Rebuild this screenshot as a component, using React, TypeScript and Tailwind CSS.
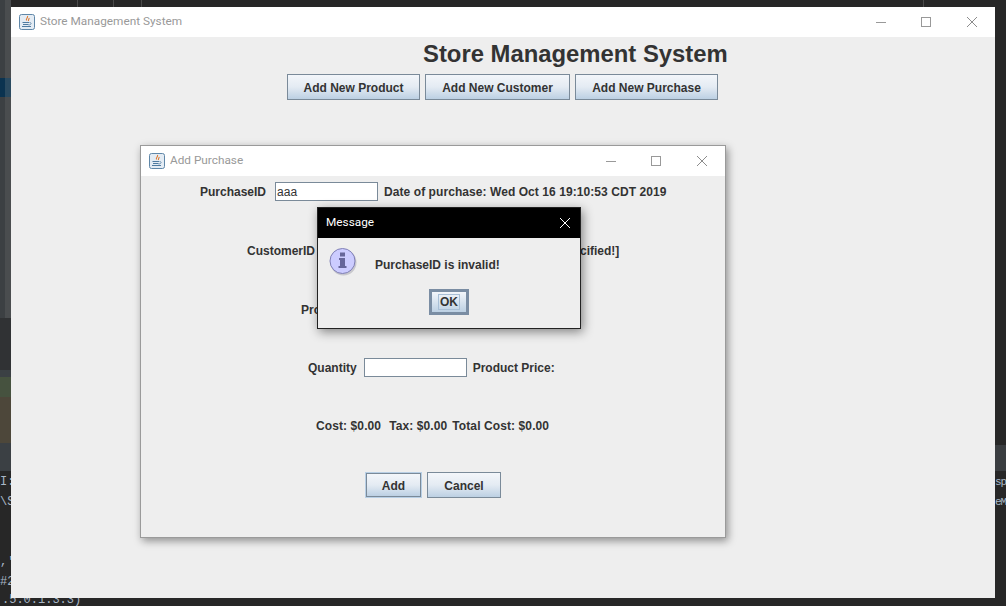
const sans = "font-['Liberation_Sans',Arial,sans-serif]";
const mono = "font-['Liberation_Mono',monospace]";
const label = "pt-[2px] text-[12px] font-bold leading-[14px] text-[#333333] whitespace-nowrap";
const btn =
  "flex items-center justify-center pt-[2px] h-[26px] border border-[#7a8a99] bg-gradient-to-b from-[#f3f6fa] via-[#e4ebf3] to-[#bcd0e3] text-[12px] font-bold text-[#333333] whitespace-nowrap";
const winTitle = "font-['Roboto',sans-serif] text-[11.8px]";

function JavaIcon() {
  return (
    <svg width="16" height="16" viewBox="0 0 16 16" className="shrink-0">
      <rect x="0.5" y="0.5" width="15" height="15" rx="2" fill="#e4ecf4" stroke="#5f87a8" />
      <path d="M8.500 2c1 1.500-2 2.500-1 4.500M10 4c.5 1-1 1.500-.5 3" fill="none" stroke="#e0762a" strokeWidth="1.100" />
      <path d="M3.500 8.500h6.500M4 10.500h5.500M3 12.500h9" stroke="#4f7ba0" strokeWidth="1" />
      <path d="M10.500 8.500c2.500 0 2 2.500-1 2.500" fill="none" stroke="#4f7ba0" strokeWidth="0.800" />
    </svg>
  );
}

function WinControls() {
  return (
    <div className="flex items-center">
      <svg width="12" height="12" viewBox="0 0 12 12">
        <path d="M1 6.500h10" stroke="#999999" />
      </svg>
      <svg width="12" height="12" viewBox="0 0 12 12" className="ml-[33px]">
        <rect x="1.500" y="1.500" width="9" height="9" fill="none" stroke="#999999" />
      </svg>
      <svg width="12" height="12" viewBox="0 0 12 12" className="ml-[34px]">
        <path d="M1 1l10 10M11 1L1 11" stroke="#8c8c8c" />
      </svg>
    </div>
  );
}

function InfoIcon() {
  return (
    <svg width="30" height="30" viewBox="0 0 30 30" className="shrink-0">
      <circle cx="14.500" cy="15.500" r="13" fill="#8f8f9c" opacity="0.4" />
      <circle cx="13.500" cy="14" r="12.500" fill="#ccccff" stroke="#7f7fb5" />
      <rect x="11" y="5.500" width="5" height="4" fill="#66669a" />
      <path d="M10 11h6v8h1.500v2h-8v-2H11v-6h-1z" fill="#66669a" />
    </svg>
  );
}

export default function App() {
  return (
    <div className={`relative w-[1006px] h-[606px] overflow-hidden bg-[#272727] ${sans}`}>
      {/* editor behind the windows */}
      <div className="absolute left-0 top-0 w-[5px] h-[318px] bg-[#3c4043]">
        <div className="mt-[78px] h-[19px] bg-[#0b3350]" />
      </div>
      <div className="absolute left-[5px] top-0 w-[6px] h-[318px] bg-[#4a4d4f]">
        <div className="mt-[78px] h-[19px] bg-[#2a4a60]" />
      </div>
      <div className="absolute left-0 top-[318px] w-[11px] h-[52px] bg-[#303234]" />
      <div className="absolute left-0 top-[370px] w-[11px] h-[101px] bg-[#3b4044]">
        <div className="mt-[7px] h-[20px] bg-[#46523f]" />
        <div className="h-[46px] bg-[#4d473a]" />
      </div>
      <div className="absolute left-[995px] top-[445px] w-[11px] h-[26px] bg-[#3a3d40]" />
      <div className="absolute left-[77px] top-0 w-px h-[7px] bg-[#4a4a4a]" />
      <div className="absolute left-[113px] top-0 w-px h-[7px] bg-[#4a4a4a]" />
      <div className="absolute left-[141px] top-0 w-px h-[7px] bg-[#4a4a4a]" />
      <div className="absolute left-[923px] top-0 w-px h-[7px] bg-[#4a4a4a]" />
      <div className={`absolute left-0 top-[472px] ${mono} text-[12px] leading-[20px] text-[#a9b7c6] whitespace-pre`}>
        {"I:\n\\S\n\n\n,'\n#2"}
      </div>
      <div className={`absolute left-[2px] top-[595px] ${mono} text-[12px] leading-[10px] text-[#a9b7c6]`}>
        .5.0.1.3.3)
      </div>
      <div className={`absolute left-[995px] top-[472px] ${mono} text-[11px] tracking-[-1px] leading-[20px] text-[#a9b7c6] whitespace-pre`}>
        {"sp\neM"}
      </div>

      {/* main window */}
      <div className="absolute left-[11px] top-[7px] w-[984px] h-[591px] flex flex-col bg-[#eeeeee]">
        <div className="flex items-center h-[30px] shrink-0 bg-white pl-[8px] pr-[17px]">
          <JavaIcon />
          <span className={`ml-[5px] ${winTitle} text-[#999999]`}>Store Management System</span>
          <div className="ml-auto">
            <WinControls />
          </div>
        </div>
        <div className="relative flex-1">
          <div className="pl-[412px] pt-[3px] text-[23.85px] font-bold leading-[28px] text-[#333333] whitespace-nowrap">
            Store Management System
          </div>
          <div className="flex gap-[5px] pl-[276px] mt-[6px]">
            <div className={`${btn} w-[133px]`}>Add New Product</div>
            <div className={`${btn} w-[145px]`}>Add New Customer</div>
            <div className={`${btn} w-[143px]`}>Add New Purchase</div>
          </div>

          {/* Add Purchase window */}
          <div className="absolute left-[129px] top-[108px] w-[586px] h-[393px] flex flex-col border border-[#9a9a9a] bg-[#eeeeee] shadow-[2px_3px_8px_rgba(0,0,0,0.4)]">
            <div className="flex items-center h-[30px] shrink-0 bg-white pl-[8px] pr-[17px]">
              <JavaIcon />
              <span className={`ml-[5px] ${winTitle} text-[#999999]`}>Add Purchase</span>
              <div className="ml-auto">
                <WinControls />
              </div>
            </div>
            <div className="flex flex-col">
              <div className="flex items-center h-[20px] mt-[5px] pl-[59px]">
                <span className={label}>PurchaseID</span>
                <div className="ml-[9px] w-[103px] h-[19px] border border-[#7a8a99] bg-white pl-[1px] text-[12px] leading-[18px] text-[#333333]">aaa</div>
                <span className={`${label} ml-[6px] tracking-[0.07px]`}>Date of purchase: Wed Oct 16 19:10:53 CDT 2019</span>
              </div>
              <div className="flex items-center h-[20px] mt-[39px] pl-[106px]">
                <span className={label}>CustomerID</span>
                <span className={`${label} ml-[159px]`}>[Customer not specified!]</span>
              </div>
              <div className="flex items-center h-[20px] mt-[39px] pl-[160px]">
                <span className={label}>ProductID</span>
              </div>
              <div className="flex items-center h-[20px] mt-[38px] pl-[167px]">
                <span className={label}>Quantity</span>
                <div className="ml-[7px] w-[103px] h-[19px] border border-[#7a8a99] bg-white" />
                <span className={`${label} ml-[6px]`}>Product Price:</span>
              </div>
              <div className="flex items-center h-[16px] mt-[40px] pl-[175px] tracking-[0.1px]">
                <span className={label}>Cost: $0.00</span>
                <span className={`${label} ml-[8px]`}>Tax: $0.00</span>
                <span className={`${label} ml-[5px]`}>Total Cost: $0.00</span>
              </div>
              <div className="flex items-center gap-[6px] mt-[39px] pl-[225px]">
                <div className={`${btn} w-[55px] !h-[24px] outline-1 outline-[#b8cfe5]`}>Add</div>
                <div className={`${btn} w-[74px]`}>Cancel</div>
              </div>
            </div>
          </div>

          {/* Message dialog */}
          <div className="absolute left-[306px] top-[170px] w-[264px] h-[122px] flex flex-col border border-[#222222] bg-[#eeeeee] shadow-[2px_3px_10px_rgba(0,0,0,0.45)]">
            <div className="flex items-center justify-between h-[30px] shrink-0 bg-black pl-[8px] pr-[9px]">
              <span className={`${winTitle} text-white`}>Message</span>
              <svg width="12" height="12" viewBox="0 0 12 12">
                <path d="M1 1l10 10M11 1L1 11" stroke="#ffffff" />
              </svg>
            </div>
            <div className="flex items-center mt-[9px] pl-[11px]">
              <InfoIcon />
              <span className="ml-[16px] pt-[6px] text-[12px] font-bold leading-[14px] text-[#333333] whitespace-nowrap">PurchaseID is invalid!</span>
            </div>
            <div className="flex justify-center mt-[12px]">
              <div className="flex items-center justify-center w-[40px] h-[26px] border-[3px] border-[#7a8da3] bg-gradient-to-b from-[#f3f6fa] to-[#bcd0e3] text-[12px] font-bold text-[#333333]">
                <span className="border border-[#a8bfd6] px-px leading-[14px]">OK</span>
              </div>
            </div>
          </div>
        </div>
      </div>
    </div>
  );
}
